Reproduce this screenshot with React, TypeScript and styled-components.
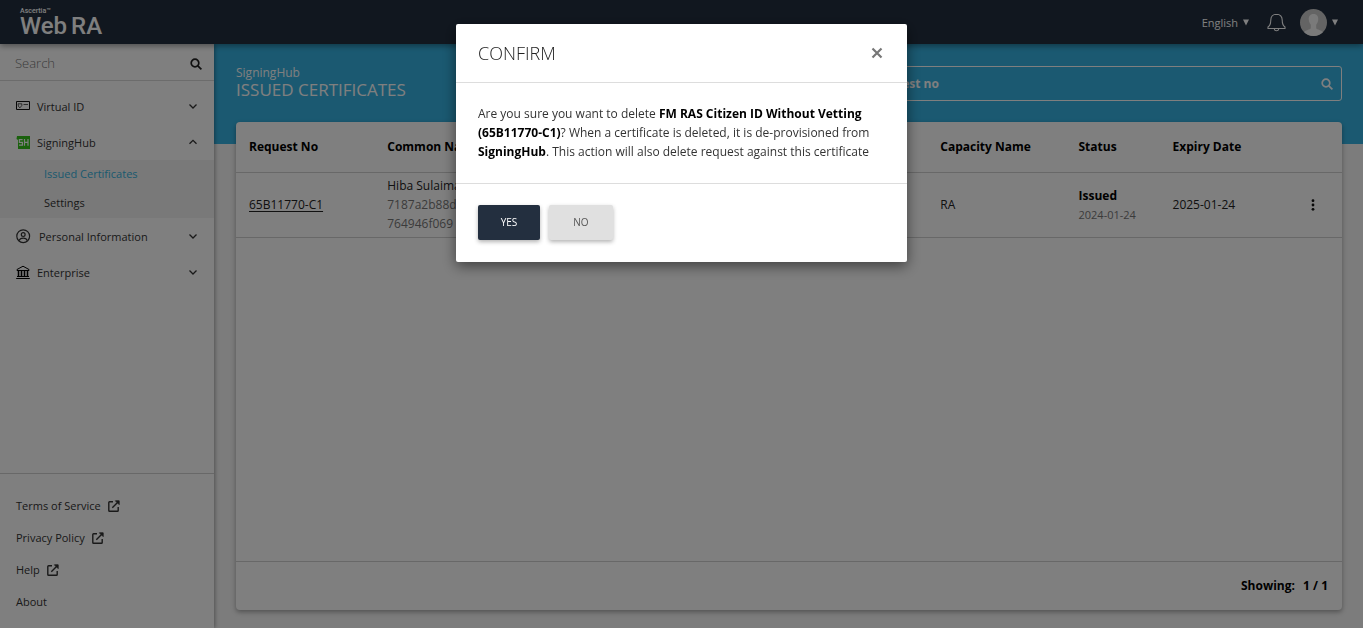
import React from 'react';
import styled, { createGlobalStyle, css } from 'styled-components';

const Global = createGlobalStyle`
  * { box-sizing: border-box; }
  html, body, #root { height: 100%; }
  body {
    margin: 0;
    font-family: 'Open Sans', 'Noto Sans', sans-serif;
    font-size: 12px;
    line-height: 19px;
    color: #222;
    background: #f8f8f8;
    overflow: hidden;
  }
  button, input { font: inherit; color: inherit; }
  a { color: inherit; text-decoration: none; }
`;

const Page = styled.div`
  display: flex;
  flex-direction: column;
  min-height: 100vh;
`;

const TopBar = styled.header`
  display: flex;
  align-items: center;
  justify-content: space-between;
  height: 44px;
  padding: 0 25px 0 20px;
  background: #232f3f;
  color: #fff;
  box-shadow: 0 2px 6px rgba(0, 0, 0, 0.4);
  z-index: 2;
`;

const Logo = styled.a`
  display: flex;
  flex-direction: column;
  font-family: Roboto, sans-serif;
`;

const LogoMaker = styled.span`
  font-size: 7px;
  font-weight: 500;
  line-height: 8px;
`;

const LogoName = styled.span`
  display: flex;
  gap: 4px;
  font-size: 24px;
  font-weight: 500;
  line-height: 22px;
`;

const TopActions = styled.div`
  display: flex;
  align-items: center;
  gap: 14px;
`;

const BarButton = styled.button<{ $apart?: boolean }>`
  display: flex;
  align-items: center;
  gap: 5px;
  margin-right: ${(p) => (p.$apart ? 4 : 0)}px;
  padding: 0;
  border: 0;
  background: none;
  font-size: 11px;
`;

const Body = styled.div`
  display: flex;
  flex: 1;
`;

const Sidebar = styled.aside`
  display: flex;
  flex-direction: column;
  width: 214px;
  flex-shrink: 0;
  background: #fff;
  font-size: 11px;
  box-shadow: 1px 0 4px rgba(0, 0, 0, 0.35);
  z-index: 1;
`;

const MenuSearch = styled.label`
  display: flex;
  align-items: center;
  height: 37px;
  padding: 3px 12px 0 15px;
  border-bottom: 1px solid #d8d8d8;
`;

const SearchInput = styled.input`
  flex: 1;
  min-width: 0;
  padding: 0;
  border: 0;
  outline: 0;
  background: none;
  &::placeholder { color: inherit; opacity: 1; }
`;

const MenuInput = styled(SearchInput)`
  font-size: 13px;
  font-weight: 300;
  color: #777;
`;

const Menu = styled.nav`
  flex: 1;
  padding-top: 7px;
`;

const MenuItem = styled.button<{ $gap?: number }>`
  display: flex;
  align-items: center;
  gap: ${(p) => p.$gap ?? 6}px;
  width: 100%;
  height: 36px;
  padding: 0 16px;
  border: 0;
  background: none;
  text-align: left;
  color: #333;
  > svg:last-child { margin-left: auto; }
`;

const SubMenu = styled.div`
  background: #f2f2f2;
`;

const SubLink = styled.a<{ $active?: boolean }>`
  display: block;
  height: 29px;
  padding-left: 44px;
  line-height: 28px;
  color: ${(p) => (p.$active ? '#36b3df' : '#333')};
`;

const SideFooter = styled.footer`
  display: flex;
  flex-direction: column;
  gap: 13px;
  padding: 22px 16px 17px;
  border-top: 1px solid #d0d0d0;
`;

const FooterLink = styled.a`
  display: flex;
  align-items: center;
  gap: 7px;
  color: #333;
`;

const Main = styled.main`
  display: flex;
  flex-direction: column;
  flex: 1;
  min-width: 0;
  padding: 22px 21px 18px 22px;
  background: linear-gradient(#36b3e3, #36b3e3) top / 100% 100px no-repeat;
`;

const Heading = styled.div`
  display: flex;
  justify-content: space-between;
  height: 56px;
  color: #fff;
`;

const Crumb = styled.div`
  line-height: 14px;
`;

const Title = styled.h1`
  margin: 0;
  font-size: 17px;
  font-weight: 400;
  line-height: 20px;
`;

const RequestSearch = styled.label`
  display: flex;
  align-items: center;
  width: 538px;
  height: 35px;
  padding: 0 8px;
  border: 1px solid #fff;
  border-radius: 3px;
`;

const RequestInput = styled(SearchInput)`
  font-weight: 700;
`;

const Card = styled.section`
  display: flex;
  flex-direction: column;
  flex: 1;
  background: #fff;
  border-radius: 4px;
  box-shadow: 0 2px 5px rgba(0, 0, 0, 0.35);
`;

const Table = styled.table`
  width: 100%;
  table-layout: fixed;
  border-collapse: collapse;
  th, td {
    padding: 0 0 0 13px;
    text-align: left;
    border-bottom: 1px solid #d0d0d0;
  }
  th { height: 50px; font-weight: 700; color: #000; }
  td { height: 65px; }
`;

const Muted = styled.div<{ $small?: boolean }>`
  color: #777;
  ${(p) => p.$small && css`font-size: 11px;`}
`;

const Strong = styled.strong`
  font-weight: 700;
  color: #000;
`;

const RequestLink = styled.a`
  && { text-decoration: underline; text-underline-offset: 2px; }
`;

const CardFooter = styled.footer`
  margin-top: auto;
  height: 49px;
  padding: 0 14px;
  border-top: 1px solid #d0d0d0;
  line-height: 48px;
  text-align: right;
  font-weight: 700;
  color: #000;
  span { margin-left: 5px; }
`;

const Overlay = styled.div`
  position: fixed;
  inset: 0;
  z-index: 10;
  display: flex;
  align-items: flex-start;
  justify-content: center;
  padding-top: 24px;
  background: rgba(0, 0, 0, 0.5);
`;

const Dialog = styled.div`
  width: 451px;
  background: #fff;
  border-radius: 2px;
  box-shadow: 0 4px 14px rgba(0, 0, 0, 0.5);
`;

const DialogHead = styled.div`
  display: flex;
  align-items: center;
  justify-content: space-between;
  height: 59px;
  padding: 0 23px 0 22px;
  border-bottom: 1px solid #ddd;
`;

const DialogTitle = styled.h2`
  margin: 0;
  font-size: 18px;
  font-weight: 300;
`;

const DialogText = styled.p`
  margin: 0;
  padding: 21px 22px 22px;
  border-bottom: 1px solid #ddd;
  color: #333;
`;

const DialogActions = styled.div`
  display: flex;
  gap: 9px;
  padding: 21px 22px 22px;
`;

const ActionButton = styled.button<{ $primary?: boolean }>`
  height: 35px;
  width: ${(p) => (p.$primary ? 62 : 64)}px;
  padding: 0;
  border: 0;
  border-radius: 2px;
  font-size: 10px;
  background: ${(p) => (p.$primary ? '#232f3f' : '#e0e0e0')};
  color: ${(p) => (p.$primary ? '#fff' : '#555')};
  box-shadow: 0 2px 4px rgba(0, 0, 0, 0.3);
`;

const CloseButton = styled.button`
  display: flex;
  padding: 0;
  border: 0;
  background: none;
`;

const Magnifier = ({ size = 12 }: { size?: number }) => (
  <svg width={size} height={size} viewBox="0 0 12 12" fill="none" stroke="currentColor" strokeWidth="1.7">
    <circle cx="5" cy="5" r="3.8" />
    <path d="M7.8 7.8 11.4 11.4" />
  </svg>
);

const Chevron = ({ up }: { up?: boolean }) => (
  <svg width="10" height="8" viewBox="0 0 10 8" fill="none" stroke="currentColor" strokeWidth="1.3">
    <path d={up ? 'M1.5 5.8 5 2.3l3.5 3.5' : 'M1.500 2.500 5 6l3.500-3.500'} />
  </svg>
);

const Caret = () => (
  <svg width="6" height="7" viewBox="0 0 6 7" fill="currentColor">
    <path d="M0 0.5h6L3 6.5z" />
  </svg>
);

const CardIcon = () => (
  <svg width="15" height="10" viewBox="0 0 15 10" fill="none" stroke="#111">
    <path d="M.5 .5h13v8H.5z" />
    <path d="M2 2.800h3.800v1.700L4 6.800 2.500 5.500zM7.500 3.500h4.500" strokeWidth=".7" />
  </svg>
);

const HubIcon = () => (
  <svg width="15" height="13" viewBox="0 0 15 13">
    <path d="M1 0h13v13H2V4L.5 3z" fill="#35c31a" />
    <path d="M6.6 3.6H3.4v2.7h3v2.8H3M8.5 3v6.8M12 3v6.8M8.5 6.4H12" fill="none" stroke="#fff" strokeWidth="1.2" />
  </svg>
);

const PersonIcon = () => (
  <svg width="15" height="15" viewBox="0 0 15 15" fill="none" stroke="#333" strokeWidth="1.2">
    <circle cx="7.2" cy="7.2" r="6.4" />
    <circle cx="7.2" cy="5.6" r="1.9" />
    <path d="M3.2 11.6c.8-3.4 7.2-3.4 8 0" />
  </svg>
);

const BankIcon = () => (
  <svg width="15" height="15" viewBox="0 0 15 15" fill="none" stroke="#000">
    <path d="M1 4.500 7 1.200l6 3.300v1H1zM.2 13.500h13.600M1 11.500h12" />
    <path d="M2.500 6v5.500M5.500 6v5.500M8.500 6v5.500M11.500 6v5.500" strokeWidth="1.500" />
  </svg>
);

const External = () => (
  <svg width="12" height="12" viewBox="0 0 12 12" fill="none" stroke="#333" strokeWidth="1.4">
    <path d="M5 1.7H1.6a.8.8 0 0 0-.8.8v7.9c0 .5.3.8.8.8h7.8c.5 0 .8-.3.8-.8V7M4.3 7.7 10.5 1.5" />
    <path d="M7.4.8h3.8v3.8z" fill="#333" strokeWidth=".8" />
  </svg>
);

const Bell = () => (
  <svg width="19" height="19" viewBox="0 0 19 19" fill="none" stroke="#fff" strokeWidth="1.1">
    <path d="M7.300 16c.3 2.300 4.100 2.300 4.400 0M9.500 1.200c-3.700 0-5.700 2.500-5.700 5.800 0 4-.5 5.600-2.800 7v1.500h17V14c-2.300-1.400-2.800-3-2.800-7 0-3.300-2-5.800-5.700-5.800z" />
  </svg>
);

const Avatar = () => (
  <svg width="27" height="27" viewBox="0 0 27 27">
    <clipPath id="avatar"><circle cx="13.5" cy="13.5" r="13.5" /></clipPath>
    <g clipPath="url(#avatar)">
      <path d="M0 0h27v27H0z" fill="#c9c9c9" />
      <path d="M13.5 5c3.6 0 5 2.6 4.7 5.8-.2 2.5-1.2 4-2 4.9v3.6c.5 1.400 5.800 2 7 4.200V27H3.800v-3.500c1.200-2.200 6.500-2.800 7-4.200v-3.600c-.8-.9-1.800-2.400-2-4.900C8.500 7.600 9.900 5 13.500 5z" fill="#f4f4f4" />
    </g>
  </svg>
);

const Dots = () => (
  <svg width="4" height="12" viewBox="0 0 4 12" fill="#111">
    <circle cx="2" cy="1.7" r="1.4" />
    <circle cx="2" cy="6" r="1.4" />
    <circle cx="2" cy="10.3" r="1.4" />
  </svg>
);

const footerLinks = [
  { label: 'Terms of Service', external: true },
  { label: 'Privacy Policy', external: true },
  { label: 'Help', external: true },
  { label: 'About', external: false },
];

export default function App() {
  return (
    <>
      <Global />
      <Page>
        <TopBar>
          <Logo href="#">
            <LogoMaker>Ascertia™</LogoMaker>
            <LogoName><span>Web</span><span>RA</span></LogoName>
          </Logo>
          <TopActions>
            <BarButton $apart>English <Caret /></BarButton>
            <BarButton aria-label="Notifications"><Bell /></BarButton>
            <BarButton aria-label="Account"><Avatar /><Caret /></BarButton>
          </TopActions>
        </TopBar>
        <Body>
          <Sidebar>
            <MenuSearch>
              <MenuInput placeholder="Search" aria-label="Search menu" />
              <Magnifier />
            </MenuSearch>
            <Menu>
              <MenuItem><CardIcon />Virtual ID<Chevron /></MenuItem>
              <MenuItem><HubIcon />SigningHub<Chevron up /></MenuItem>
              <SubMenu>
                <SubLink href="#" $active>Issued Certificates</SubLink>
                <SubLink href="#">Settings</SubLink>
              </SubMenu>
              <MenuItem $gap={8}><PersonIcon />Personal Information<Chevron /></MenuItem>
              <MenuItem><BankIcon />Enterprise<Chevron /></MenuItem>
            </Menu>
            <SideFooter>
              {footerLinks.map((l) => (
                <FooterLink href="#" key={l.label}>{l.label}{l.external && <External />}</FooterLink>
              ))}
            </SideFooter>
          </Sidebar>
          <Main>
            <Heading>
              <div>
                <Crumb>SigningHub</Crumb>
                <Title>ISSUED CERTIFICATES</Title>
              </div>
              <RequestSearch>
                <RequestInput placeholder="Search by request no" aria-label="Search requests" />
                <Magnifier />
              </RequestSearch>
            </Heading>
            <Card>
              <Table>
                <colgroup>
                  <col style={{ width: '12.5%' }} /><col style={{ width: '50%' }} /><col style={{ width: '12.5%' }} />
                  <col /><col style={{ width: '12.5%' }} /><col style={{ width: '4%' }} />
                </colgroup>
                <thead>
                  <tr><th>Request No</th><th>Common Name</th><th>Capacity Name</th><th>Status</th><th>Expiry Date</th><th /></tr>
                </thead>
                <tbody>
                  <tr>
                    <td><RequestLink href="#">65B11770-C1</RequestLink></td>
                    <td>Hiba Sulaiman<Muted>7187a2b88d</Muted><Muted>764946f069</Muted></td>
                    <td>RA</td>
                    <td><Strong>Issued</Strong><Muted $small>2024-01-24</Muted></td>
                    <td>2025-01-24</td>
                    <td><CloseButton aria-label="Row actions"><Dots /></CloseButton></td>
                  </tr>
                </tbody>
              </Table>
              <CardFooter>Showing: <span>1 / 1</span></CardFooter>
            </Card>
          </Main>
        </Body>
      </Page>
      <Overlay>
        <Dialog role="dialog" aria-modal="true" aria-labelledby="confirm-title">
          <DialogHead>
            <DialogTitle id="confirm-title">CONFIRM</DialogTitle>
            <CloseButton aria-label="Close">
              <svg width="14" height="12" viewBox="0 0 14 12" stroke="#777" strokeWidth="2.2">
                <path d="M2.500 1.500l9 9M11.500 1.500l-9 9" />
              </svg>
            </CloseButton>
          </DialogHead>
          <DialogText>
            Are you sure you want to delete <Strong>FM RAS Citizen ID Without Vetting (65B11770-C1)</Strong>? When a
            certificate is deleted, it is de-provisioned from <Strong>SigningHub</Strong>. This action will also delete
            request against this certificate
          </DialogText>
          <DialogActions>
            <ActionButton $primary>YES</ActionButton>
            <ActionButton>NO</ActionButton>
          </DialogActions>
        </Dialog>
      </Overlay>
    </>
  );
}
